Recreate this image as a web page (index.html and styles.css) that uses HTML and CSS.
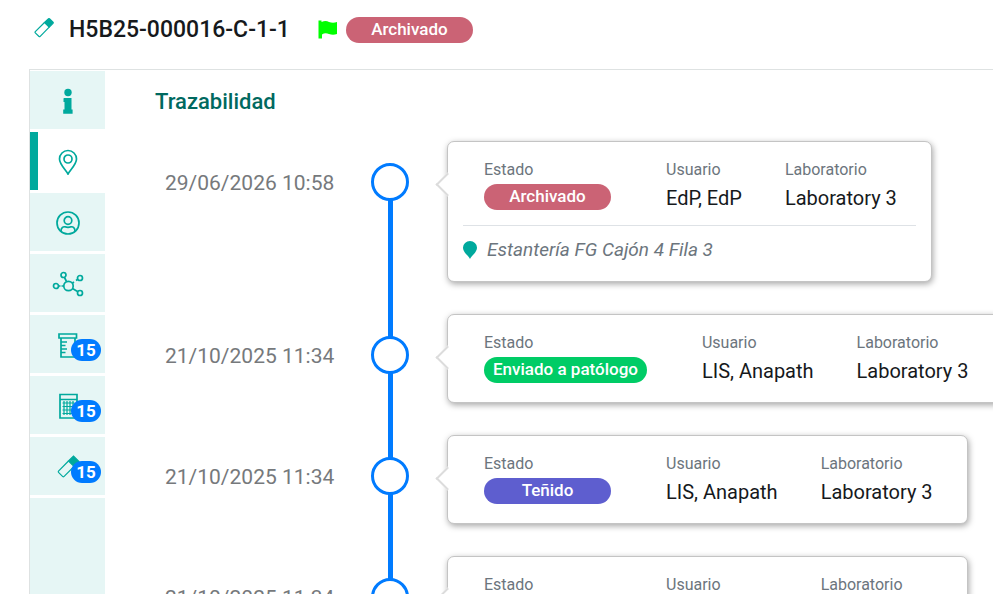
FILE: index.html
```html
<!DOCTYPE html>
<html lang="es">
<head>
  <meta charset="UTF-8">
  <meta name="viewport" content="width=device-width, initial-scale=1.0">
  <title>H5B25-000016-C-1-1</title>
  <link rel="stylesheet" href="styles.css">
</head>
<body>

<div class="page">
  <header class="header">
    <svg class="slide-icon" width="20" height="20" viewBox="0 0 20 20" fill="none" stroke="#00a99d" stroke-width="1.200">
      <path d="M10.500 4.500L14.500 0.800Q15 0.500 15.500 0.800L19 4.200Q19.500 4.800 19 5.300L15.200 9.200Z" fill="#00a99d"/>
      <path d="M10.500 4.500L1.300 13.700Q0.700 14.300 1.300 14.900L5 18.500Q5.600 18.900 6.200 18.300L15.200 9.200"/>
    </svg>
    <h1>H5B25-000016-C-1-1</h1>
    <svg class="flag" width="20" height="20" viewBox="0 0 20 20" fill="#00ff00">
      <path d="M0.500 0.500H3.500V2C7 0.500 9 1 11 2Q15 3.500 19 2V14Q15 15.500 11 14Q7 12.500 4 14.500V18.500H0.500Z"/>
    </svg>
    <span class="badge archived">Archivado</span>
  </header>

  <div class="panel">
    <nav class="sidebar">
      <button type="button" aria-label="Información">
        <svg width="24" height="26" viewBox="0 0 24 26" fill="#00a99d">
          <circle cx="12" cy="4.500" r="3.700"/>
          <path d="M8 10H15.500V21.500H16.600V25.700H7.200V21.500H8.500V14H7.500V10.500Z"/>
        </svg>
      </button>
      <button type="button" class="active" aria-label="Trazabilidad">
        <svg width="24" height="26" viewBox="0 0 24 26" fill="none" stroke="#00a99d" stroke-width="1.700">
          <path d="M12 25C10 21 3.500 15.500 3.500 10A8.500 8.500 0 0 1 20.500 10C20.500 15.500 14 21 12 25Z"/>
          <circle cx="12" cy="10" r="4"/>
        </svg>
      </button>
      <button type="button" aria-label="Paciente">
        <svg width="24" height="24" viewBox="0 0 24 24" fill="none" stroke="#00a99d" stroke-width="1.700">
          <circle cx="12" cy="12" r="11"/>
          <circle cx="12" cy="9.500" r="3.800"/>
          <path d="M5 20.500C5 16.500 7 15.500 9 15.800Q12 16.800 15 15.800C17 15.500 19 16.500 19 20.500"/>
        </svg>
      </button>
      <button type="button" aria-label="Relaciones">
        <svg width="32" height="26" viewBox="0 0 32 26" fill="none" stroke="#00a99d" stroke-width="1.700">
          <circle cx="16.500" cy="15" r="4.700"/>
          <circle cx="11.500" cy="4" r="2.500"/>
          <circle cx="28" cy="7" r="2.500"/>
          <circle cx="4" cy="15" r="2.500"/>
          <circle cx="28" cy="22" r="2.500"/>
          <path d="M12.500 6.500L14.500 10.500M20.500 12L22 11M24 9.500L25.500 8.500M6.500 15H8.500M9.500 15H12M20.500 17.500L25.500 20.500"/>
        </svg>
      </button>
      <button type="button" aria-label="Muestras">
        <svg width="24" height="26" viewBox="0 0 24 26" fill="none" stroke="#00a99d" stroke-width="1.700">
          <path d="M3 2H20.500V6H3ZM5 6V25H19V6M5 10H11M5 13.500H9.500M5 17H11M5 20.500H9.500"/>
        </svg>
        <span class="count">15</span>
      </button>
      <button type="button" aria-label="Bloques">
        <svg width="24" height="26" viewBox="0 0 24 26" fill="none" stroke="#00a99d" stroke-width="1.700">
          <path d="M4 1.500H21V25H4ZM4 6.500H21"/>
          <path d="M6.500 10H18.500M6.500 13.500H18.500M6.500 17H18.500M6.500 20.500H18.500M8 8V22M11 8V22M14 8V22M17 8V22" stroke-width="1.200"/>
        </svg>
        <span class="count">15</span>
      </button>
      <button type="button" aria-label="Portaobjetos">
        <svg width="24" height="24" viewBox="0 0 24 24" fill="none" stroke="#00a99d" stroke-width="1.200">
          <path d="M12.500 6L17.500 1L23 6.500L18 11.500Z" fill="#00a99d"/>
          <path d="M12.500 6L2.500 16.200Q2 16.800 2.500 17.400L6.800 21.600Q7.300 22 7.900 21.600L18 11.500"/>
        </svg>
        <span class="count">15</span>
      </button>
      <div class="sidebar-rest"></div>
    </nav>

    <main class="content">
      <h2>Trazabilidad</h2>

      <ol class="timeline">
        <li>
          <time>29/06/2026 10:58</time>
          <div class="marker"><span class="dot"></span></div>
          <article class="card">
            <div class="fields">
              <div class="field"><span class="label">Estado</span><span class="badge archived">Archivado</span></div>
              <div class="field"><span class="label">Usuario</span><span class="value">EdP, EdP</span></div>
              <div class="field"><span class="label">Laboratorio</span><span class="value">Laboratory 3</span></div>
            </div>
            <p class="location">
              <svg width="14" height="18" viewBox="0 0 14 18" fill="#00a99d">
                <path d="M7 18C5.500 14.500 0 11.500 0 6.500A7 6.500 0 0 1 14 6.500C14 11.500 8.500 14.500 7 18Z"/>
              </svg>
              Estantería FG Cajón 4 Fila 3
            </p>
          </article>
        </li>
        <li>
          <time>21/10/2025 11:34</time>
          <div class="marker"><span class="dot"></span></div>
          <article class="card">
            <div class="fields">
              <div class="field"><span class="label">Estado</span><span class="badge sent">Enviado a patólogo</span></div>
              <div class="field"><span class="label">Usuario</span><span class="value">LIS, Anapath</span></div>
              <div class="field"><span class="label">Laboratorio</span><span class="value">Laboratory 3</span></div>
            </div>
          </article>
        </li>
        <li>
          <time>21/10/2025 11:34</time>
          <div class="marker"><span class="dot"></span></div>
          <article class="card">
            <div class="fields">
              <div class="field"><span class="label">Estado</span><span class="badge stained">Teñido</span></div>
              <div class="field"><span class="label">Usuario</span><span class="value">LIS, Anapath</span></div>
              <div class="field"><span class="label">Laboratorio</span><span class="value">Laboratory 3</span></div>
            </div>
          </article>
        </li>
        <li>
          <time>21/10/2025 11:34</time>
          <div class="marker"><span class="dot"></span></div>
          <article class="card">
            <div class="fields">
              <div class="field"><span class="label">Estado</span><span class="badge stained">Teñido</span></div>
              <div class="field"><span class="label">Usuario</span><span class="value">LIS, Anapath</span></div>
              <div class="field"><span class="label">Laboratorio</span><span class="value">Laboratory 3</span></div>
            </div>
          </article>
        </li>
      </ol>
    </main>
  </div>
</div>

</body>
</html>
```

FILE: styles.css
```css
* {
  box-sizing: border-box;
}

body {
  margin: 0;
  height: 100vh;
  padding: 0 7px 6px 0;
  overflow: hidden;
  background: #fff;
  font-family: Roboto, "Liberation Sans", sans-serif;
  color: #16191c;
}

.page {
  height: 100%;
  display: flex;
  flex-direction: column;
  overflow: hidden;
}

/* header */
.header {
  display: flex;
  align-items: center;
  padding: 16px 34px 26px;
}

.header h1 {
  margin: 0 28px 0 15px;
  font-size: 23px;
  line-height: 27px;
  font-weight: 500;
}

.slide-icon {
  margin-bottom: 4px;
}

.flag {
  margin-right: 8px;
}

.badge {
  display: block;
  min-width: 127px;
  height: 26px;
  padding: 0 9px;
  border-radius: 13px;
  color: #fff;
  font-size: 17px;
  line-height: 25px;
  font-weight: 500;
  text-align: center;
  white-space: nowrap;
}

.archived { background: #cb6375; }
.sent { background: #00cc66; }
.stained { background: #5e5ecf; }

/* panel with side tabs */
.panel {
  flex: 1;
  min-height: 0;
  display: flex;
  margin-left: 29px;
  border-top: 1px solid #dee2e2;
  border-left: 1px solid #dee2e2;
}

.sidebar {
  display: flex;
  flex-direction: column;
  flex: none;
  gap: 3px;
  width: 75px;
  padding-top: 1px;
}

.sidebar button {
  position: relative;
  display: flex;
  align-items: center;
  justify-content: center;
  flex: none;
  height: 58px;
  padding: 1px 0 0;
  border: 0;
  background: #e6f6f5;
  cursor: pointer;
}

.sidebar button.active {
  background: #fff;
  box-shadow: inset 8px 0 #00a99d;
}

.sidebar-rest {
  flex: 1;
  background: #e6f6f5;
}

.count {
  position: absolute;
  right: 4px;
  top: 24px;
  width: 30px;
  height: 22px;
  border-radius: 11px;
  background: #007bff;
  color: #fff;
  font-family: Roboto, sans-serif;
  font-size: 17px;
  line-height: 22px;
  font-weight: 700;
  text-align: center;
}

/* timeline */
.content {
  flex: 1;
  min-width: 0;
  padding: 19px 0 0 50px;
  overflow: hidden;
}

.content h2 {
  margin: 0 0 26px;
  font-size: 22px;
  line-height: 26px;
  font-weight: 500;
  color: #00695f;
}

.timeline {
  list-style: none;
  margin: 0;
  padding: 0 0 0 10px;
}

.timeline li {
  display: grid;
  grid-template-columns: 168px 38px max-content;
  column-gap: 38px;
}

.timeline time {
  padding-top: 30px;
  font-size: 21px;
  line-height: 24px;
  color: #76797c;
  white-space: nowrap;
}

.marker {
  padding-top: 22px;
  background: linear-gradient(#007bff, #007bff) center top / 5px 100% no-repeat;
}

.timeline li:first-child .marker {
  background-position: center 40px;
}

.dot {
  display: block;
  height: 38px;
  border: 3px solid #007bff;
  border-radius: 50%;
  background: #fff;
}

.card {
  position: relative;
  min-height: 89px;
  margin-bottom: 32px;
  padding: 16px 15px;
  border: 1px solid #c4c4c4;
  border-radius: 7px;
  background: #fff;
  box-shadow: 1px 2px 6px rgba(0, 0, 0, 0.35);
}

.card::before {
  content: "";
  position: absolute;
  left: -9px;
  top: 34px;
  width: 15px;
  height: 15px;
  border-left: 2px solid #dcdcdc;
  border-bottom: 2px solid #dcdcdc;
  background: #fff;
  transform: rotate(45deg);
}

.fields {
  position: relative;
  display: flex;
  gap: 43px;
  padding: 0 19px 0 21px;
}

.field:first-child {
  margin-right: 12px;
}

.label {
  display: block;
  margin-bottom: 2px;
  font-size: 16px;
  line-height: 24px;
  color: #6c757d;
}

.value {
  display: block;
  font-size: 20px;
  line-height: 28px;
}

.location {
  display: flex;
  align-items: center;
  gap: 10px;
  margin: 13px 0 0;
  padding: 11px 0 2px;
  border-top: 1px solid #dee2e6;
  font-size: 19px;
  line-height: 26px;
  font-style: italic;
  color: #6c757d;
}
```
